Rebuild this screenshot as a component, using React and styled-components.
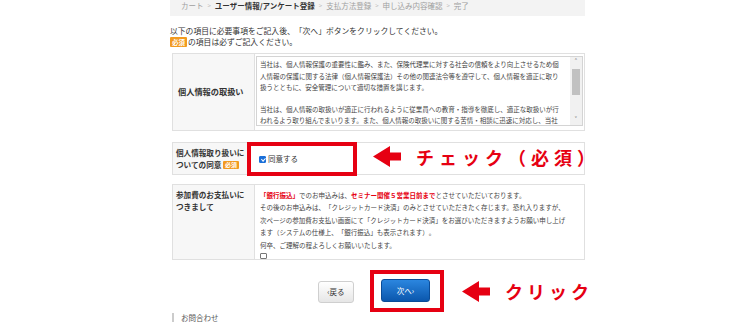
import React from 'react'
import styled, { createGlobalStyle } from 'styled-components';

const GlobalStyle = createGlobalStyle`
  body{
    margin: 0;
    background: #fff;
    font-family: "Noto Sans CJK JP", "Noto Sans", sans-serif;
    color: #333;
    text-spacing-trim: space-all;
  }
`

const RED = '#e60012';

function Arrow({ width = 28, height = 21 }) {
  return (
    <svg width={width} height={height} viewBox="0 0 28 21">
      <polygon points="0,10.5 17,0 17,6.5 28,6.5 28,14.5 17,14.5 17,21" fill={RED} />
    </svg>
  )
}

function App() {
  return (
    <Page>
      <GlobalStyle />
      <Column>
        <Breadcrumb>
          <span>カート</span><Sep>&gt;</Sep>
          <span className='current'>ユーザー情報/アンケート登録</span><Sep>&gt;</Sep>
          <span>支払方法登録</span><Sep>&gt;</Sep>
          <span>申し込み内容確認</span><Sep>&gt;</Sep>
          <span>完了</span>
        </Breadcrumb>

        <Intro>
          <p>以下の項目に必要事項をご記入後、「次へ」ボタンをクリックしてください。</p>
          <p><Badge>必須</Badge>の項目は必ずご記入ください。</p>
        </Intro>

        <Table $height={78} $mt={6}>
          <Head>個人情報の取扱い</Head>
          <Cell $pad={'2px 1px 4px 1px'}>
            <ScrollBox>
              <ScrollText>
                <Para>
                  <Line>当社は、個人情報保護の重要性に鑑み、また、保険代理業に対する社会の信頼をより向上させるため個</Line>
                  <Line>人情報の保護に関する法律（個人情報保護法）その他の関連法令等を遵守して、個人情報を適正に取り</Line>
                  <Line>扱うとともに、安全管理について適切な措置を講じます。</Line>
                </Para>
                <Para>
                  <Line>当社は、個人情報の取扱いが適正に行われるように従業員への教育・指導を徹底し、適正な取扱いが行</Line>
                  <Line>われるよう取り組んでまいります。また、個人情報の取扱いに関する苦情・相談に迅速に対応し、当社</Line>
                </Para>
              </ScrollText>
              <Scrollbar>
                <ScrollArrow>˄</ScrollArrow>
                <Track><Thumb /></Track>
                <ScrollArrow>˅</ScrollArrow>
              </Scrollbar>
            </ScrollBox>
          </Cell>
        </Table>

        <Row $mt={11}>
          <Table $height={33}>
            <Head $w={75} $small>
              個人情報取り扱いに<br />ついての同意 <Badge $small>必須</Badge>
            </Head>
            <Cell $pad={'0 0 0 11px'} $center>
              <Check $checked />
              <CheckLabel>同意する</CheckLabel>
            </Cell>
          </Table>
          <RedFrame />
          <Note $left={203} $top={4}>
            <Arrow />
            <NoteText>チェック（必須）</NoteText>
          </Note>
        </Row>

        <Table $height={76} $mt={9}>
          <Head $small>参加費のお支払いに<br />つきまして</Head>
          <Cell $pad={'5px 0 0 5px'}>
            <PayText>
              <Line><Em>「銀行振込」</Em>でのお申込みは、<Em>セミナー開催５営業日前まで</Em>とさせていただいております。</Line>
              <Line>その後のお申込みは、「クレジットカード決済」のみとさせていただきたく存じます。恐れ入りますが、</Line>
              <Line>次ページの参加費お支払い画面にて「クレジットカード決済」をお選びいただきますようお願い申し上げ</Line>
              <Line>ます（システムの仕様上、「銀行振込」も表示されます）。</Line>
              <Line>何卒、ご理解の程よろしくお願いいたします。</Line>
            </PayText>
            <Check />
          </Cell>
        </Table>

        <Buttons>
          <BackButton>‹戻る</BackButton>
          <NextFrame>
            <NextButton>次へ›</NextButton>
          </NextFrame>
          <Note $static>
            <Arrow />
            <NoteText $small>クリック</NoteText>
          </Note>
        </Buttons>

        <Contact>お問合わせ</Contact>
      </Column>
    </Page>
  )
}

const Page = styled.div`
  width: 750px;
  height: 322px;
  overflow: hidden;
  background: #fff;
`

const Column = styled.div`
  margin-left: 170px;
  width: 415px;
  display: flex;
  flex-direction: column;
`

const Breadcrumb = styled.div`
  height: 16px;
  background: #f3f3f3;
  padding-left: 11px;
  font-size: 7.5px;
  line-height: 12px;
  color: #a0a0a0;
  display: flex;
  align-items: flex-start;
  white-space: nowrap;
  .current{
    color: #333;
    font-weight: bold;
  }
`

const Sep = styled.span`
  font-size: 6px;
  margin: 0 4px;
  color: #b8b8b8;
`

const Intro = styled.div`
  margin-top: 10px;
  font-size: 7.8px;
  line-height: 10.5px;
  color: #333;
  p{
    margin: 0;
    white-space: nowrap;
    display: flex;
    align-items: center;
  }
`

const Badge = styled.span`
  display: inline-block;
  background: #f29a1f;
  color: #fff;
  font-size: ${p => p.$small ? '6px' : '6.5px'};
  line-height: ${p => p.$small ? '8px' : '10px'};
  padding: 0 2px;
  border-radius: 1px;
  font-weight: bold;
  margin-right: 1px;
  vertical-align: middle;
`

const Table = styled.div`
  margin-top: ${p => p.$mt || 0}px;
  margin-left: 2px;
  width: 413px;
  height: ${p => p.$height}px;
  box-sizing: border-box;
  border: 1px solid #e0e0e0;
  display: flex;
`

const Head = styled.div`
  width: ${p => p.$w || 82}px;
  flex-shrink: 0;
  box-sizing: border-box;
  background: #f7f7f7;
  border-right: 1px solid #e0e0e0;
  padding-left: ${p => p.$small ? 3 : 5}px;
  padding-top: ${p => p.$small ? 4 : 32}px;
  font-size: ${p => p.$small ? '7.6px' : '8.2px'};
  line-height: 11.5px;
  font-weight: bold;
  color: #333;
  white-space: nowrap;
`

const Cell = styled.div`
  flex: 1;
  padding: ${p => p.$pad};
  display: flex;
  flex-direction: ${p => p.$center ? 'row' : 'column'};
  align-items: ${p => p.$center ? 'center' : 'flex-start'};
  min-width: 0;
`

const ScrollBox = styled.div`
  width: 100%;
  height: 70px;
  box-sizing: border-box;
  border: 1px solid #d4d4d4;
  display: flex;
  overflow: hidden;
`

const ScrollText = styled.div`
  flex: 1;
  padding: 2px 0 0 3px;
  font-size: 6.5px;
  line-height: 11.6px;
  color: #444;
  overflow: hidden;
`

const Para = styled.div`
  margin-bottom: 10px;
`

const Line = styled.div`
  white-space: nowrap;
`

const Scrollbar = styled.div`
  width: 12px;
  flex-shrink: 0;
  background: #f1f1f1;
  display: flex;
  flex-direction: column;
  align-items: center;
`

const ScrollArrow = styled.div`
  height: 10px;
  font-size: 8px;
  line-height: 10px;
  color: #666;
`

const Track = styled.div`
  flex: 1;
  width: 100%;
  padding: 2px 2px 0;
  box-sizing: border-box;
`

const Thumb = styled.div`
  height: 26px;
  background: #c1c1c1;
`

const Row = styled.div`
  position: relative;
  margin-top: ${p => p.$mt}px;
`

const RedFrame = styled.div`
  position: absolute;
  left: 77px;
  top: 0px;
  width: 110px;
  height: 34px;
  box-sizing: border-box;
  border: 4px solid ${RED};
`

const Check = styled.span`
  display: inline-block;
  width: 7px;
  height: 7px;
  box-sizing: border-box;
  border-radius: 1px;
  border: 1px solid ${p => p.$checked ? '#1a6fd8' : '#777'};
  background: ${p => p.$checked ? '#1a6fd8' : '#fff'};
  position: relative;
  margin-top: 2px;
  &::after{
    content: '';
    display: ${p => p.$checked ? 'block' : 'none'};
    position: absolute;
    left: 1.5px;
    top: 0px;
    width: 1.5px;
    height: 3px;
    border: solid #fff;
    border-width: 0 1px 1px 0;
    transform: rotate(45deg);
  }
`

const CheckLabel = styled.span`
  font-size: 7.5px;
  margin-left: 2px;
  color: #333;
`

const Note = styled.div`
  position: ${p => p.$static ? 'static' : 'absolute'};
  left: ${p => p.$left}px;
  top: ${p => p.$top}px;
  display: flex;
  align-items: center;
  gap: 15px;
  flex-shrink: 0;
  margin-left: ${p => p.$static ? '18px' : 0};
`

const NoteText = styled.span`
  color: ${RED};
  font-weight: bold;
  font-size: 18px;
  letter-spacing: ${p => p.$small ? '4px' : '5px'};
  white-space: nowrap;
  line-height: 20px;
`

const PayText = styled.div`
  font-size: 6.5px;
  line-height: 12.4px;
  color: #444;
  margin-top: -1px;
`

const Em = styled.span`
  color: ${RED};
  font-weight: bold;
`

const Buttons = styled.div`
  margin-top: 10px;
  margin-left: 148px;
  display: flex;
  align-items: center;
  width: 300px;
`

const BackButton = styled.div`
  flex-shrink: 0;
  width: 36px;
  height: 22px;
  box-sizing: border-box;
  border: 1px solid #cfcfcf;
  border-radius: 3px;
  background: linear-gradient(#ffffff, #e6e6e6);
  font-size: 7.5px;
  line-height: 20px;
  text-align: center;
  color: #333;
  white-space: nowrap;
  margin-right: 16px;
  margin-top: 1px;
`

const NextFrame = styled.div`
  flex-shrink: 0;
  border: 4px solid ${RED};
  padding: 5px 10px 6px 7px;
`

const NextButton = styled.div`
  width: 49px;
  height: 23px;
  box-sizing: border-box;
  border: 1px solid #0a4c98;
  border-radius: 3px;
  background: linear-gradient(#2b86df, #0b57ad);
  color: #fff;
  font-size: 7.5px;
  line-height: 21px;
  text-align: center;
  white-space: nowrap;
`

const Contact = styled.div`
  margin-top: 1px;
  margin-left: 2px;
  border-left: 2px solid #ccc;
  padding-left: 7px;
  font-size: 7.5px;
  line-height: 10px;
  color: #555;
`

export default App
